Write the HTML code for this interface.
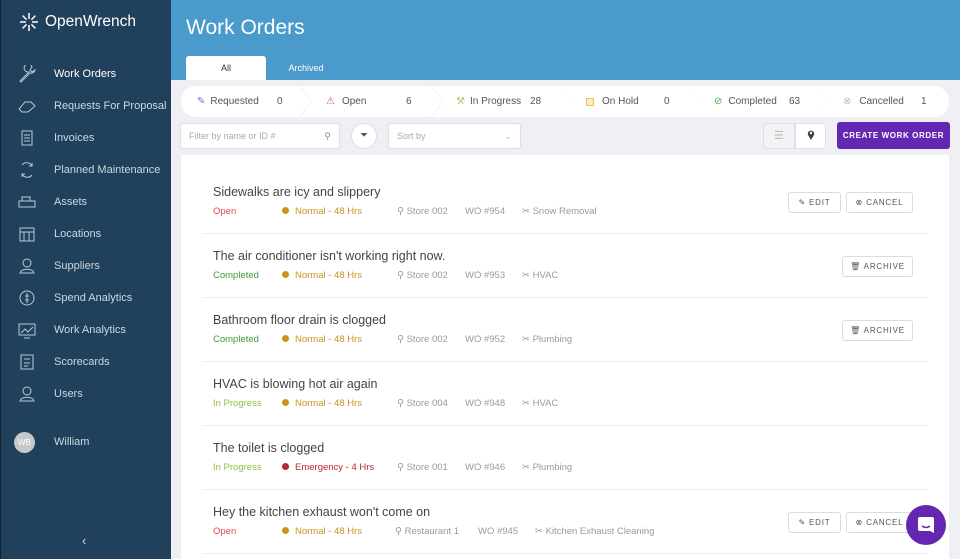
<!DOCTYPE html>
<html><head><meta charset="utf-8"><style>
*{box-sizing:border-box;margin:0;padding:0}
body{width:960px;height:559px;overflow:hidden;font-family:"Liberation Sans",sans-serif;background:#eef0f4;position:relative}
.sb{position:absolute;left:0;top:0;width:171px;height:559px;background:#21405b;color:#fff;border-left:1px solid #0d2437}
.logo{position:absolute;left:17px;top:11px;font-size:15.5px;display:flex;align-items:center;gap:5px}
.nav{position:absolute;left:0;top:58px;width:170px}
.nav div{height:32px;display:flex;align-items:center;font-size:11px;color:#cfd8e0;padding-left:16px}
.nav div.act{color:#fff}
.nav svg{width:20px;height:18px;margin-right:17px}
.top{position:absolute;left:171px;top:0;width:789px;height:80px;background:#4a9acb}
.top h1{position:absolute;left:15px;top:16px;font-size:21px;font-weight:normal;color:#fff}
.tab{position:absolute;top:56px;height:24px;width:80px;font-size:9px;text-align:center;line-height:24px;color:#fff}
.tab.a{background:#fff;color:#333;border-radius:3px 3px 0 0}
.seg{position:absolute;top:86px;height:31px;background:#fff;font-size:10px;color:#555;display:flex;align-items:center}
.seg span.n{position:absolute}
.inp{position:absolute;background:#fff;border:1px solid #dde;border-radius:3px;font-size:9px;color:#aaa;display:flex;align-items:center;padding-left:8px}
.card{position:absolute;left:181px;top:155px;width:768px;height:404px;background:#fff}
.row{position:absolute;left:21px;width:726px;height:64px;border-bottom:1px solid #ebedf0}
.row .t{position:absolute;left:11px;top:15px;font-size:12.5px;color:#444}
.row .m{position:absolute;top:36px;font-size:9.5px;color:#999;white-space:nowrap}
.dot{display:inline-block;width:7px;height:7px;border-radius:50%;margin-right:6px;vertical-align:0}
.btn{position:absolute;top:22px;height:21px;border:1px solid #dcdcdc;border-radius:3px;font-size:8px;letter-spacing:.8px;color:#555;display:flex;align-items:center;justify-content:center}
</style></head><body>
<div class="sb">
<div class="logo"><svg width="22" height="22" viewBox="0 0 22 22" stroke="#fff" stroke-width="1.5" fill="none"><path d="M11 2v6M11 14v6M2 11h6M14 11h6M4.6 4.6l4 4M13.4 13.4l4 4M17.4 4.6l-4 4M8.6 13.4l-4 4"/></svg>OpenWrench</div>
<div class="nav">
<div class="act"><svg viewBox="0 0 20 18" fill="none" stroke="#bcc8d4"><path d="M3 16l9-9a4 4 0 1 1 3 -5l-2 3 2 2 3-2a4 4 0 0 1-5 3l-9 9z"/></svg>Work Orders</div>
<div><svg viewBox="0 0 20 18" fill="none" stroke="#bcc8d4"><path d="M2 12l6-7h6l4 4-7 6H5z"/></svg>Requests For Proposal</div>
<div><svg viewBox="0 0 20 18" fill="none" stroke="#bcc8d4"><rect x="5" y="2" width="10" height="14"/><path d="M7 6h6M7 9h6M7 12h6"/></svg>Invoices</div>
<div><svg viewBox="0 0 20 18" fill="none" stroke="#bcc8d4"><path d="M5 4a6 6 0 0 1 10 1M15 14a6 6 0 0 1-10-1M15 2v3h-3M5 16v-3h3"/></svg>Planned Maintenance</div>
<div><svg viewBox="0 0 20 18" fill="none" stroke="#bcc8d4"><rect x="2" y="8" width="16" height="6"/><path d="M5 8V4h8v4"/></svg>Assets</div>
<div><svg viewBox="0 0 20 18" fill="none" stroke="#bcc8d4"><rect x="3" y="3" width="14" height="13"/><path d="M3 7h14M7 7v9M12 7v9"/></svg>Locations</div>
<div><svg viewBox="0 0 20 18" fill="none" stroke="#bcc8d4"><circle cx="10" cy="6" r="4"/><path d="M3 16c1-5 13-5 14 0z"/></svg>Suppliers</div>
<div><svg viewBox="0 0 20 18" fill="none" stroke="#bcc8d4"><circle cx="10" cy="9" r="7"/><path d="M10 4v10M8 7h4M8 11h4"/></svg>Spend Analytics</div>
<div><svg viewBox="0 0 20 18" fill="none" stroke="#bcc8d4"><rect x="2" y="3" width="16" height="11"/><path d="M4 12l4-4 3 3 5-5M7 17h6"/></svg>Work Analytics</div>
<div><svg viewBox="0 0 20 18" fill="none" stroke="#bcc8d4"><rect x="4" y="2" width="12" height="14"/><path d="M7 6h6M7 10h6M7 13h4"/></svg>Scorecards</div>
<div><svg viewBox="0 0 20 18" fill="none" stroke="#bcc8d4"><circle cx="10" cy="6" r="4"/><path d="M3 16c1-5 13-5 14 0z"/></svg>Users</div>
<div style="margin-top:16px"><span style="width:21px;height:21px;border-radius:50%;background:#c8c8c8;color:#fff;font-size:8px;display:inline-flex;align-items:center;justify-content:center;margin-left:-3px;margin-right:19px">WB</span>William</div>
</div>
<div style="position:absolute;left:81px;top:533px;color:#cfd8e0;font-size:13px">‹</div>
</div>
<div class="top"><h1>Work Orders</h1>
<div class="tab a" style="left:15px">All</div><div class="tab" style="left:95px">Archived</div></div>

<div class="seg" style="left:181px;width:130px;border-radius:15px 0 0 15px;clip-path:polygon(0 0,118px 0,130px 50%,118px 100%,0 100%)"><span style="color:#8a63c4;margin:0 5px 0 16px">✎</span>Requested<span class="n" style="left:96px">0</span></div>
<div class="seg" style="left:300px;width:143px;clip-path:polygon(0 0,131px 0,143px 50%,131px 100%,0 100%,12px 50%)"><span style="color:#e06060;margin:0 7px 0 26px">⚠</span>Open<span class="n" style="left:106px">6</span></div>
<div class="seg" style="left:432px;width:140px;clip-path:polygon(0 0,128px 0,140px 50%,128px 100%,0 100%,12px 50%)"><span style="color:#a6cf6a;margin:0 5px 0 24px">⚒</span>In Progress<span class="n" style="left:98px">28</span></div>
<div class="seg" style="left:560px;width:142px;clip-path:polygon(0 0,130px 0,142px 50%,130px 100%,0 100%,12px 50%)"><span style="display:inline-block;width:8px;height:8px;border:1px solid #e8c060;background:#fbeec0;margin:0 8px 0 26px"></span>On Hold<span class="n" style="left:104px">0</span></div>
<div class="seg" style="left:690px;width:137px;clip-path:polygon(0 0,125px 0,137px 50%,125px 100%,0 100%,12px 50%)"><span style="color:#4caf50;margin:0 6px 0 24px">⊘</span>Completed<span class="n" style="left:99px">63</span></div>
<div class="seg" style="left:815px;width:134px;border-radius:0 15px 15px 0;clip-path:polygon(0 0,134px 0,134px 100%,0 100%,12px 50%)"><span style="color:#bbb;margin:0 8px 0 28px">⊗</span>Cancelled<span class="n" style="left:106px">1</span></div>

<div class="inp" style="left:180px;top:123px;width:160px;height:26px">Filter by name or ID #<span style="position:absolute;right:8px;color:#888">⚲</span></div>
<div style="position:absolute;left:351px;top:123px;width:26px;height:26px;border-radius:50%;background:#fff;border:1px solid #dde;font-size:10px;color:#555;text-align:center;line-height:24px">⏷</div>
<div class="inp" style="left:388px;top:123px;width:133px;height:26px">Sort by<span style="position:absolute;right:8px;color:#bbb">⌄</span></div>
<div style="position:absolute;left:763px;top:123px;width:32px;height:26px;background:#f2f3f5;border:1px solid #dde;border-radius:3px 0 0 3px;color:#bbb;font-size:11px;text-align:center;line-height:24px">☰</div>
<div style="position:absolute;left:795px;top:123px;width:31px;height:26px;background:#fff;border:1px solid #dde;border-radius:0 3px 3px 0;text-align:center;line-height:24px"><svg width="8" height="11" viewBox="0 0 8 11"><path d="M4 11L1 6a3.2 3.2 0 1 1 6 0z" fill="#444"/><circle cx="4" cy="4" r="1.2" fill="#fff"/></svg></div>
<div style="position:absolute;left:837px;top:122px;width:113px;height:27px;background:#6427b1;border-radius:3px;color:#fff;font-size:8px;font-weight:bold;letter-spacing:.6px;text-align:center;line-height:27px">CREATE WORK ORDER</div>

<div class="card">
<div class="row" style="top:15px"><div class="t">Sidewalks are icy and slippery</div>
<div class="m" style="left:11px;color:#e0464e">Open</div><div class="m" style="left:80px;color:#c4961a"><span class="dot" style="background:#c4961a"></span>Normal - 48 Hrs</div><div class="m" style="left:195px">⚲ Store 002</div><div class="m" style="left:263px">WO #954</div><div class="m" style="left:320px">✂ Snow Removal</div>
<div class="btn" style="left:586px;width:53px">✎ EDIT</div><div class="btn" style="left:644px;width:67px">⊗ CANCEL</div></div>
<div class="row" style="top:79px"><div class="t">The air conditioner isn't working right now.</div>
<div class="m" style="left:11px;color:#3a9a3a">Completed</div><div class="m" style="left:80px;color:#c4961a"><span class="dot" style="background:#c4961a"></span>Normal - 48 Hrs</div><div class="m" style="left:195px">⚲ Store 002</div><div class="m" style="left:263px">WO #953</div><div class="m" style="left:320px">✂ HVAC</div>
<div class="btn" style="left:640px;width:71px">🗑 ARCHIVE</div></div>
<div class="row" style="top:143px"><div class="t">Bathroom floor drain is clogged</div>
<div class="m" style="left:11px;color:#3a9a3a">Completed</div><div class="m" style="left:80px;color:#c4961a"><span class="dot" style="background:#c4961a"></span>Normal - 48 Hrs</div><div class="m" style="left:195px">⚲ Store 002</div><div class="m" style="left:263px">WO #952</div><div class="m" style="left:320px">✂ Plumbing</div>
<div class="btn" style="left:640px;width:71px">🗑 ARCHIVE</div></div>
<div class="row" style="top:207px"><div class="t">HVAC is blowing hot air again</div>
<div class="m" style="left:11px;color:#8cc43c">In Progress</div><div class="m" style="left:80px;color:#c4961a"><span class="dot" style="background:#c4961a"></span>Normal - 48 Hrs</div><div class="m" style="left:195px">⚲ Store 004</div><div class="m" style="left:263px">WO #948</div><div class="m" style="left:320px">✂ HVAC</div></div>
<div class="row" style="top:271px"><div class="t">The toilet is clogged</div>
<div class="m" style="left:11px;color:#8cc43c">In Progress</div><div class="m" style="left:80px;color:#b52a2a"><span class="dot" style="background:#b52a2a"></span>Emergency - 4 Hrs</div><div class="m" style="left:195px">⚲ Store 001</div><div class="m" style="left:263px">WO #946</div><div class="m" style="left:320px">✂ Plumbing</div></div>
<div class="row" style="top:335px"><div class="t">Hey the kitchen exhaust won't come on</div>
<div class="m" style="left:11px;color:#e0464e">Open</div><div class="m" style="left:80px;color:#c4961a"><span class="dot" style="background:#c4961a"></span>Normal - 48 Hrs</div><div class="m" style="left:193px">⚲ Restaurant 1</div><div class="m" style="left:276px">WO #945</div><div class="m" style="left:333px">✂ Kitchen Exhaust Cleaning</div>
<div class="btn" style="left:586px;width:53px">✎ EDIT</div><div class="btn" style="left:644px;width:67px">⊗ CANCEL</div></div>
</div>
<div style="position:absolute;left:906px;top:505px;width:40px;height:40px;border-radius:50%;background:#6427b1;display:flex;align-items:center;justify-content:center"><svg width="20" height="20" viewBox="0 0 20 20"><path d="M4 2h12a2 2 0 0 1 2 2v14l-4-2H4a2 2 0 0 1-2-2V4a2 2 0 0 1 2-2z" fill="#fff"/><path d="M6 11q4 3 8 0" stroke="#6427b1" stroke-width="1.5" fill="none"/></svg></div>
</body></html>
